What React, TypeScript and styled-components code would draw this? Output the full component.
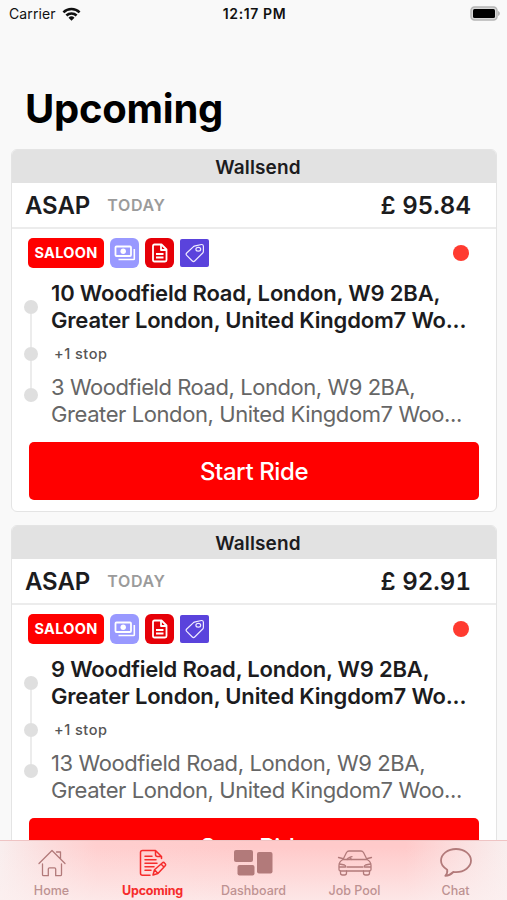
import React from "react";
import styled, { createGlobalStyle } from "styled-components";

const GlobalStyle = createGlobalStyle`
  * { box-sizing: border-box; }
  html, body { margin: 0; padding: 0; background: #f9f9f9; overflow: hidden; }
  body { font-family: Inter, "Liberation Sans", sans-serif; color: #1c1c1e; }
  svg { display: block; }
`;

const Screen = styled.div`
  position: relative;
  width: 507px;
  height: 900px;
  overflow: hidden;
  background: #f9f9f9;
`;

const StatusBar = styled.header`
  display: grid;
  grid-template-columns: 1fr auto 1fr;
  align-items: center;
  height: 27px;
  padding: 0 7px 0 9px;
  font-size: 14px;
  color: #111;
`;

const Carrier = styled.div`
  display: flex;
  align-items: center;
  gap: 6px;
  letter-spacing: 0.1px;
`;

const Clock = styled.div`
  font-weight: 600;
  font-size: 14px;
  letter-spacing: 0.6px;
`;

const BatterySlot = styled.div`
  display: flex;
  justify-content: flex-end;
`;

const Title = styled.h1`
  margin: 0;
  height: 122px;
  padding: 57px 0 0 25px;
  font-size: 40px;
  line-height: 50px;
  font-weight: 700;
  letter-spacing: -0.25px;
  color: #000;
`;

const RideList = styled.main`
  display: flex;
  flex-direction: column;
  gap: 13px;
  padding: 0 10px 0 11px;
`;

const Card = styled.article`
  height: 363px;
  flex: none;
  border: 1px solid #e4e4e4;
  border-radius: 6px;
  background: #fff;
  overflow: hidden;
`;

const CardHeader = styled.div`
  height: 33px;
  background: #e2e2e2;
  text-align: center;
  font-size: 19px;
  line-height: 35px;
  padding-left: 8px;
  font-weight: 600;
  letter-spacing: 0.15px;
`;

const Summary = styled.div`
  display: flex;
  align-items: center;
  height: 46px;
  padding: 0 25px 0 13px;
  border-bottom: 2px solid #ececec;
`;

const When = styled.span`
  font-size: 24px;
  font-weight: 600;
  letter-spacing: -0.1px;
`;

const Day = styled.span`
  margin-left: 17px;
  font-size: 16px;
  font-weight: 600;
  letter-spacing: 0.7px;
  color: #9b9b9b;
`;

const Price = styled.span`
  margin-left: auto;
  font-size: 24px;
  font-weight: 600;
  font-variant-numeric: tabular-nums;
  letter-spacing: 0.05px;
`;

const Tags = styled.div`
  display: flex;
  align-items: center;
  gap: 6px;
  height: 48px;
  padding: 0 27px 0 16px;
`;

const VehicleTag = styled.span`
  width: 76px;
  height: 30px;
  border-radius: 5px;
  background: #ff0000;
  color: #fff;
  font-size: 14.5px;
  line-height: 30px;
  font-weight: 700;
  letter-spacing: 0.3px;
  text-align: center;
`;

const IconTag = styled.span<{ $color: string; $square?: boolean }>`
  display: grid;
  place-items: center;
  width: 29px;
  height: ${(p) => (p.$square ? 28 : 30)}px;
  border-radius: ${(p) => (p.$square ? 2 : 6)}px;
  background: ${(p) => p.$color};
`;

const StatusDot = styled.span`
  width: 16px;
  height: 16px;
  margin-left: auto;
  border-radius: 50%;
  background: #ff3b30;
`;

const Route = styled.div`
  display: grid;
  grid-template-columns: 14px 1fr;
  column-gap: 13px;
  height: 151px;
  padding: 2px 20px 0 12px;
`;

const Track = styled.div`
  display: flex;
  flex-direction: column;
  align-items: center;
  padding-top: 21px;
`;

const Stop = styled.span`
  width: 14px;
  height: 14px;
  border-radius: 50%;
  background: #dfdfdf;
`;

const Leg = styled.span<{ $length: number }>`
  width: 2px;
  height: ${(p) => p.$length}px;
  background: #ececec;
`;

const Pickup = styled.div`
  font-size: 22px;
  line-height: 26.5px;
  padding-top: 1px;
  font-weight: 600;
  white-space: nowrap;
`;

const ExtraStops = styled.div`
  height: 41px;
  padding-left: 3px;
  font-size: 14.5px;
  line-height: 41px;
  font-weight: 500;
  letter-spacing: 0.5px;
  color: #555;
`;

const Dropoff = styled.div`
  font-size: 22px;
  line-height: 26.5px;
  color: #666;
  white-space: nowrap;
`;

const Line = styled.div<{ $spacing: number }>`
  letter-spacing: ${(p) => p.$spacing}px;
`;

const StartButton = styled.button`
  display: block;
  width: 450px;
  height: 58px;
  margin: 14px 0 0 17px;
  border: 0;
  border-radius: 5px;
  background: #ff0000;
  color: #fff;
  font: 500 24px Inter, sans-serif;
  letter-spacing: -0.4px;
`;

const TabBar = styled.nav`
  position: absolute;
  inset: auto 0 0;
  display: grid;
  grid-template-columns: repeat(5, 101px);
  justify-content: center;
  height: 60px;
  border-top: 1px solid #efc4c4;
  background:
    linear-gradient(to bottom, rgba(252, 240, 240, 0) 10%, rgba(252, 240, 240, 0.75) 100%),
    linear-gradient(to right, #f9eeee 0, #fbdfdf 8%, #ffcfcf 19%, #ffcaca 50%, #ffcaca 80%, #fbdfdf 91%, #f9eeee 100%);
`;

const Tab = styled.a<{ $active?: boolean }>`
  display: grid;
  grid-template-rows: 43px 13px;
  justify-items: center;
  color: ${(p) => (p.$active ? "#f62b2b" : "#bd9292")};
  font-size: 12.5px;
  line-height: 13px;
  letter-spacing: ${(p) => (p.$active ? -0.2 : 0)}px;
  font-weight: ${(p) => (p.$active ? 700 : 500)};
`;

const TabIcon = styled.span<{ $active?: boolean }>`
  display: grid;
  place-items: center;
  color: ${(p) => (p.$active ? "#f62b2b" : "#b27a7a")};
`;

const WifiIcon = () => (
  <svg width="19" height="14" viewBox="0 0 19 14" fill="none" stroke="#111" strokeWidth="2.5">
    <path d="M1.4 5.3a11.5 11.5 0 0 1 16.2 0M4.4 8.5a7.2 7.2 0 0 1 10.2 0" />
    <path d="M9.5 13.7 6.5 10.7a4.3 4.3 0 0 1 6 0Z" fill="#111" stroke="none" />
  </svg>
);

const BatteryIcon = () => (
  <svg width="31" height="15" viewBox="0 0 31 15">
    <rect x="2" y="1" width="26" height="13" rx="3.5" fill="#d8d8d8" stroke="#b5b5b5" strokeWidth="1.5" />
    <rect x="4" y="3" width="22" height="9" rx="1.5" fill="#000" />
    <path d="M29 5c2.5 1 2.5 4 0 5Z" fill="#b5b5b5" />
  </svg>
);

const CashIcon = () => (
  <svg width="22" height="18" viewBox="0 0 22 18" fill="none" stroke="#fff" strokeWidth="1.8">
    <rect x="1.5" y="2.5" width="15.5" height="9.5" rx="1" />
    <path d="M4.5 15.5h15q.8 0 .8-.8V5" strokeWidth="1.6" />
    <circle cx="9.2" cy="7.2" r="2.7" fill="#fff" stroke="none" />
  </svg>
);

const DocumentIcon = () => (
  <svg width="18" height="20" viewBox="0 0 18 20" fill="none" stroke="#fff" strokeWidth="1.8" strokeLinejoin="round">
    <path d="M3.500 1.500h7l5 5V17q0 1.500-1.500 1.500H3.500Q2 18.500 2 17V3q0-1.500 1.500-1.500Z" />
    <path d="M10 2v5h5M5 11h7.500M5 14.500h7.500" />
  </svg>
);

const LabelIcon = () => (
  <svg width="20" height="20" viewBox="0 0 20 20" fill="none" stroke="#eeeaff" strokeWidth="1.2" strokeLinejoin="round">
    <path d="M10.3 2.8 16.4 1.500q1.700-.2 2 1.500v5.200q0 1-.7 1.800l-8 8q-1.200 1.200-2.400 0L1.700 12.400q-1.200-1.200 0-2.400l6.800-6.400q.8-.6 1.800-.8Z" />
    <ellipse cx="13.3" cy="6.2" rx="2.4" ry="1.9" />
  </svg>
);

const HomeIcon = () => (
  <svg width="28" height="28" viewBox="0 0 28 28" fill="none" stroke="currentColor" strokeWidth="1.3" strokeLinecap="round" strokeLinejoin="round">
    <path d="M1 14.5 14 1.5l13 13M18.5 3h4v6.5" />
    <path d="M4.5 15v10.5q0 1.2 1.2 1.2h4.6V20q0-1.2 1.2-1.2h5q1.2 0 1.2 1.2v6.7h4.6q1.2 0 1.2-1.2V15" />
  </svg>
);

const EditIcon = () => (
  <svg width="28" height="28" viewBox="0 0 28 28" fill="none" stroke="currentColor" strokeWidth="1.5" strokeLinecap="round" strokeLinejoin="round">
    <path d="M11 26.2H3.5q-2 0-2-2V3.5q0-2 2-2h13l6 6V9.5M16.5 1.5v4q0 2 2 2h4" />
    <path d="M6 7.3h7M6 10.8h11M6 14.2h12M6 17.7h9M6 21.2h6" />
    <path d="m14 26 1.5-5.3 8-7q1.1-.8 2.3.5 1.4 1.4.4 2.5l-7.3 7.8ZM22 15l2.7 2.8M15.5 20.7l3.4 3.8" />
  </svg>
);

const DashboardIcon = () => (
  <svg width="42" height="26" viewBox="0 0 42 26" fill="currentColor">
    <rect x="1" y="0" width="19" height="12" rx="2" />
    <rect x="24" y="2" width="15.5" height="21.5" rx="2" />
    <rect x="4.5" y="15" width="17" height="10.5" rx="2" />
  </svg>
);

const CarIcon = () => (
  <svg width="36" height="26" viewBox="0 0 36 26" fill="none" stroke="currentColor" strokeWidth="1.3" strokeLinecap="round" strokeLinejoin="round">
    <path d="M6 9.5 9.5 2.5Q10.5 1 12 1h12q1.5 0 2.5 1.500L30 9.500M6 9.500h24M1.500 7.500l4 1M34.500 7.500l-4 1" />
    <path d="M6 9.500q-4 2-4 6v4q0 1.500 1.500 1.500h29q1.500 0 1.500-1.500v-4q0-4-4-6M10 9.500q2.500-3.500 4.500 0M13 7.200l2-.6" />
    <path d="M2.500 14l5 1q1.500.5 1 2h-6M33.500 14l-5 1q-1.500.5-1 2h6M10 17h16M3.500 21v2q0 2 2 2h2q2 0 2-2v-2M26.500 21v2q0 2 2 2h2q2 0 2-2v-2" />
  </svg>
);

const ChatIcon = () => (
  <svg width="34" height="32" viewBox="0 0 34 32" fill="none" stroke="currentColor" strokeWidth="1.8" strokeLinejoin="round">
    <path d="M8.2 22.7C4.3 20.5 2 17.3 2 13.6 2 7.2 8.7 2 17 2s15 5.2 15 11.6-6.7 11.6-15 11.6q-1.4 0-2.7-.2-3.4 3.5-8 3.8 2.500-2.500 1.900-6.100Z" />
  </svg>
);

type Ride = {
  price: string;
  pickup: string;
  pickupSpacing: number;
  dropoff: string;
  dropoffSpacing: number;
};

const rides: Ride[] = [
  { price: "£ 95.84", pickup: "10 Woodfield Road, London, W9 2BA,", pickupSpacing: -0.17, dropoff: "3 Woodfield Road, London, W9 2BA,", dropoffSpacing: -0.44 },
  { price: "£ 92.91", pickup: "9 Woodfield Road, London, W9 2BA,", pickupSpacing: -0.21, dropoff: "13 Woodfield Road, London, W9 2BA,", dropoffSpacing: -0.4 },
];

const RideCard = ({ ride }: { ride: Ride }) => (
  <Card>
    <CardHeader>Wallsend</CardHeader>
    <Summary>
      <When>ASAP</When>
      <Day>TODAY</Day>
      <Price>{ride.price}</Price>
    </Summary>
    <Tags>
      <VehicleTag>SALOON</VehicleTag>
      <IconTag $color="#9999ff"><CashIcon /></IconTag>
      <IconTag $color="#e60008"><DocumentIcon /></IconTag>
      <IconTag $color="#5a43dc" $square><LabelIcon /></IconTag>
      <StatusDot />
    </Tags>
    <Route>
      <Track>
        <Stop />
        <Leg $length={33} />
        <Stop />
        <Leg $length={27} />
        <Stop />
      </Track>
      <div>
        <Pickup>
          <Line $spacing={ride.pickupSpacing}>{ride.pickup}</Line>
          <Line $spacing={-0.19}>Greater London, United Kingdom7 Wo...</Line>
        </Pickup>
        <ExtraStops>+1 stop</ExtraStops>
        <Dropoff>
          <Line $spacing={ride.dropoffSpacing}>{ride.dropoff}</Line>
          <Line $spacing={-0.41}>Greater London, United Kingdom7 Woo...</Line>
        </Dropoff>
      </div>
    </Route>
    <StartButton>Start Ride</StartButton>
  </Card>
);

const tabs = [
  { label: "Home", Icon: HomeIcon },
  { label: "Upcoming", Icon: EditIcon },
  { label: "Dashboard", Icon: DashboardIcon },
  { label: "Job Pool", Icon: CarIcon },
  { label: "Chat", Icon: ChatIcon },
];

export default function App() {
  return (
    <Screen>
      <GlobalStyle />
      <StatusBar>
        <Carrier>Carrier <WifiIcon /></Carrier>
        <Clock>12:17 PM</Clock>
        <BatterySlot><BatteryIcon /></BatterySlot>
      </StatusBar>
      <Title>Upcoming</Title>
      <RideList>
        {rides.map((ride) => <RideCard key={ride.price} ride={ride} />)}
      </RideList>
      <TabBar>
        {tabs.map(({ label, Icon }) => (
          <Tab key={label} $active={label === "Upcoming"}>
            <TabIcon $active={label === "Upcoming"}><Icon /></TabIcon>
            {label}
          </Tab>
        ))}
      </TabBar>
    </Screen>
  );
}
